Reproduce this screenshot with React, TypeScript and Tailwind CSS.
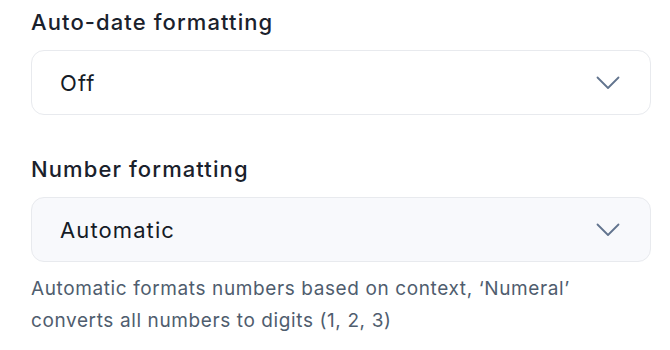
import { ReactNode } from 'react';

function Chevron() {
  return (
    <svg width="24" height="14" viewBox="0 0 24 14" fill="none" className="text-slate-500 shrink-0">
      <polyline points="1.5,1.5 12,12 22.5,1.5" stroke="currentColor" strokeWidth="1.8" strokeLinecap="round" strokeLinejoin="round" />
    </svg>
  );
}

function SelectBox({ value, muted }: { value: string; muted?: boolean }) {
  return (
    <button
      type="button"
      className={`flex h-[65px] w-full items-center justify-between rounded-[13px] border border-[#e8eaee] pl-[28px] pr-[30px] text-left ${
        muted ? 'bg-[#f8f9fc]' : 'bg-white'
      }`}
    >
      <span className="text-[22px] leading-[28px] tracking-[0.05em] text-[#151b26]">{value}</span>
      <Chevron />
    </button>
  );
}

function Field({ label, children }: { label: string; children: ReactNode }) {
  return (
    <div className="flex flex-col">
      <label className="mb-[14px] text-[22px] font-medium leading-[28px] tracking-[0.05em] text-[#1a212c]">{label}</label>
      {children}
    </div>
  );
}

export default function App() {
  return (
    <div className="min-h-screen bg-white" style={{ fontFamily: 'Inter, "Noto Sans", sans-serif' }}>
      <div className="ml-[31px] flex w-[620px] flex-col gap-[40px] pt-[8px]">
        <Field label="Auto-date formatting">
          <SelectBox value="Off" />
        </Field>
        <Field label="Number formatting">
          <SelectBox value="Automatic" muted />
          <p className="mt-[11px] text-[19px] leading-[32px] tracking-[0.032em] text-[#4f5d6e]">
            Automatic formats numbers based on context, ‘Numeral’
            <br />
            converts all numbers to digits (1, 2, 3)
          </p>
        </Field>
      </div>
    </div>
  );
}
